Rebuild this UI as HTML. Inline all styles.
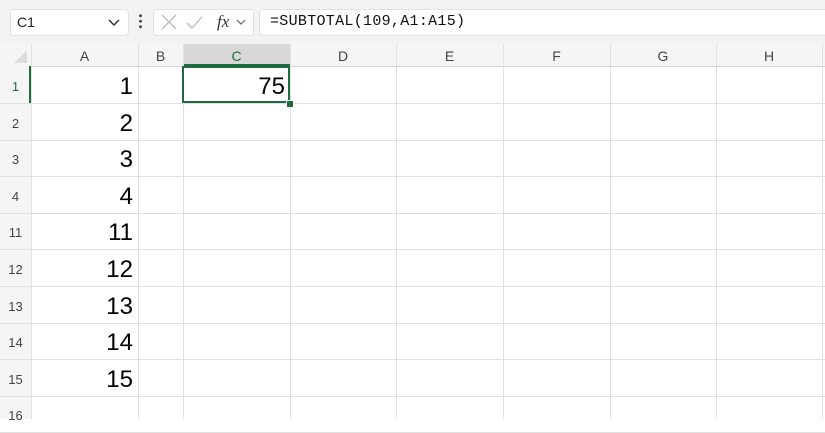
<!DOCTYPE html>
<html><head><style>
body{margin:0;width:825px;height:419px;overflow:hidden;background:#fff;font-family:"Liberation Sans",sans-serif;position:relative}
.a{position:absolute}
.top{left:0;top:0;width:825px;height:44px;background:#f3f3f3}
.box{background:#fff;border:1px solid #e1e1e1;border-radius:4px}
.hl{background:#d8d8d8}
.ch{top:44px;height:22px;font-size:14px;color:#444;text-align:center;line-height:24px}
.rh{left:0;width:31px;font-size:13px;color:#444;text-align:center}
.num{font-size:24px;color:#000;text-align:right}
</style></head><body>
<div class="a top"></div>
<div class="a box" style="left:10px;top:9px;width:117px;height:25px"></div>
<div class="a" style="left:17px;top:14px;font-size:14px;color:#222">C1</div>
<svg class="a" style="left:108px;top:17px" width="12" height="10"><path d="M1 3l5 5 5-5" stroke="#333" stroke-width="1.5" fill="none"/></svg>
<div class="a" style="left:139px;top:13px;width:3px;height:16px;background:radial-gradient(circle,#444 1.3px,transparent 1.6px) 0 0/3px 5.5px"></div>
<div class="a box" style="left:153px;top:9px;width:99px;height:25px"></div>
<svg class="a" style="left:159px;top:13px" width="95" height="20"><path d="M3 2l14 14M17 2L3 16" stroke="#bbb" stroke-width="1.3" fill="none"/><path d="M28 10l5 5 10-11" stroke="#bbb" stroke-width="1.3" fill="none"/><text x="58" y="14" font-family="Liberation Serif" font-style="italic" font-size="17" fill="#333">fx</text><path d="M78 7l4 4 4-4" stroke="#666" stroke-width="1.2" fill="none"/></svg>
<div class="a box" style="left:259px;top:9px;width:580px;height:25px"></div>
<div class="a" style="left:270px;top:13px;font-family:'Liberation Mono',monospace;font-size:15px;color:#111;letter-spacing:0.3px">=SUBTOTAL(109,A1:A15)</div>
<div class="a" style="left:0;top:44px;width:825px;height:22px;background:#f5f5f5;border-bottom:1px solid #d4d4d4"></div>
<div class="a" style="left:0;top:44px;width:31px;height:375px;background:#f5f5f5;border-right:1px solid #d4d4d4"></div>
<svg class="a" style="left:14px;top:50px" width="14" height="14"><path d="M13 0V13H0z" fill="#dcdcdc"/></svg>
<div class="a hl" style="left:183px;top:44px;width:107px;height:22px;border-bottom:2px solid #1e6b41;box-sizing:border-box"></div>
<div class="a" style="left:31px;top:44px;width:794px;height:375px;
background-image:linear-gradient(90deg,#e1e1e1 1px,transparent 1px);"></div>
<div id="g"></div>
<div class="a" style="left:182px;top:66px;width:108px;height:37px;border:2px solid #1e6b41;box-sizing:border-box"></div>
<div class="a" style="left:286px;top:100px;width:6px;height:6px;background:#1e6b41;border:1px solid #fff"></div>
<div class="a" style="left:29px;top:66px;width:2px;height:37px;background:#1e6b41"></div>
<script>
var cols=[["A",31,138],["B",138,183],["C",183,290],["D",290,396],["E",396,503],["F",503,610],["G",610,716],["H",716,822]];
var h="";
cols.forEach(function(c){h+='<div class="a ch" style="left:'+c[1]+'px;width:'+(c[2]-c[1])+'px;'+(c[0]=="C"?'color:#1e6b41':'')+'">'+c[0]+'</div>';
h+='<div class="a" style="left:'+c[2]+'px;top:44px;width:1px;height:375px;background:#e0e0e0"></div>';});
var rows=["1","2","3","4","11","12","13","14","15","16"];
for(var i=0;i<rows.length;i++){var t=67+i*36.6;
h+='<div class="a rh" style="top:'+(t+12)+'px;'+(i==0?'color:#1e6b41':'')+'">'+rows[i]+'</div>';
h+='<div class="a" style="left:0;top:'+(t+36)+'px;width:825px;height:1px;background:#e0e0e0"></div>';
if(i<9)h+='<div class="a num" style="left:31px;width:102px;top:'+(t+6)+'px">'+rows[i]+'</div>';}
h+='<div class="a num" style="left:183px;width:102px;top:73px">75</div>';
document.getElementById("g").innerHTML=h;
</script>
</body></html>
